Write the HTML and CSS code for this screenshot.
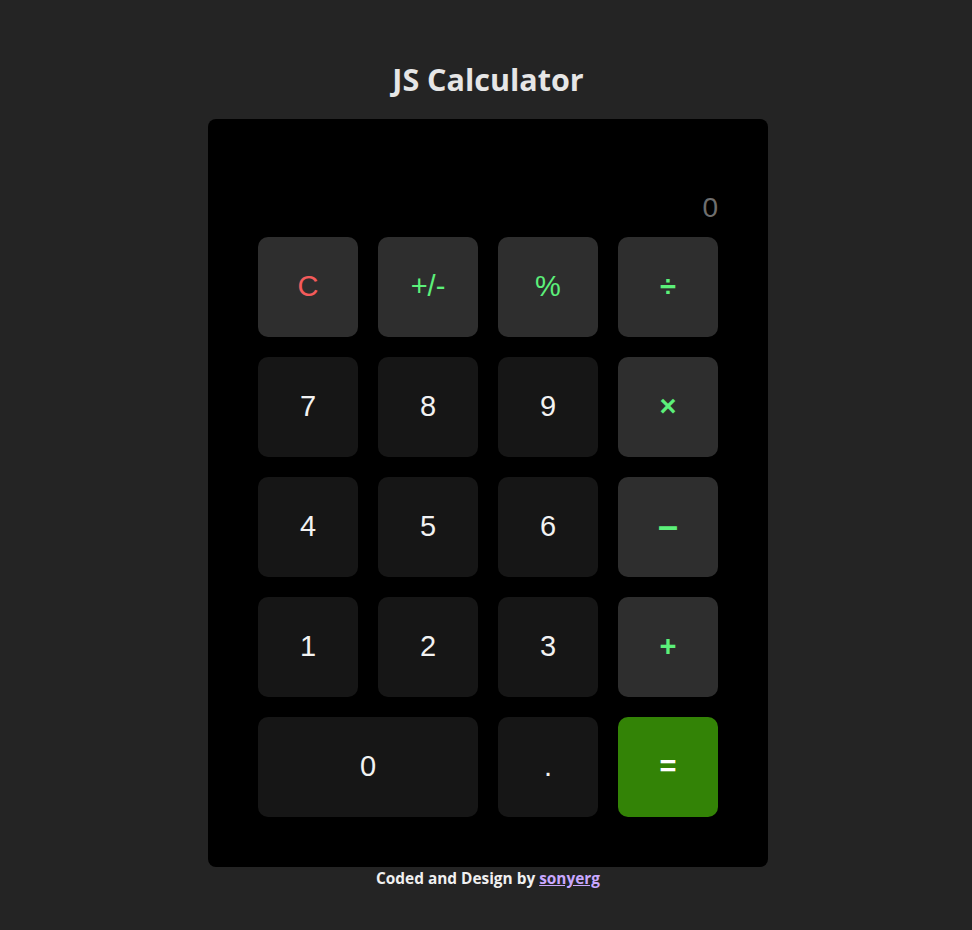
FILE: index.html
```html
<!DOCTYPE html>
<html lang="en">
<head>
<meta charset="utf-8">
<title>JS Calculator</title>
<link rel="stylesheet" href="styles.css">
</head>
<body>
<main class="page">
  <h1 class="title">JS Calculator</h1>
  <section class="calculator">
    <div class="display">0</div>
    <div class="keys">
      <button class="key key--fn key--clear">C</button>
      <button class="key key--fn key--green">+/-</button>
      <button class="key key--fn key--green">%</button>
      <button class="key key--fn key--green key--op">÷</button>
      <button class="key">7</button>
      <button class="key">8</button>
      <button class="key">9</button>
      <button class="key key--fn key--green key--op">×</button>
      <button class="key">4</button>
      <button class="key">5</button>
      <button class="key">6</button>
      <button class="key key--fn key--green key--op key--minus">–</button>
      <button class="key">1</button>
      <button class="key">2</button>
      <button class="key">3</button>
      <button class="key key--fn key--green key--op">+</button>
      <button class="key key--wide">0</button>
      <button class="key">.</button>
      <button class="key key--equals">=</button>
    </div>
  </section>
  <p class="credit">Coded and Design by <a href="#" class="credit__link">sonyerg</a></p>
</main>
</body>
</html>
```
FILE: styles.css
```css
* { box-sizing: border-box; }
html, body { margin: 0; padding: 0; }
body {
  background: #242424;
  color: #e8e8e8;
  font-family: "Open Sans", "Noto Sans", sans-serif;
}
.page {
  display: flex;
  flex-direction: column;
  align-items: center;
  padding-left: 4px;
}
.title {
  margin: 59px 0 20px;
  font-size: 30.5px;
  line-height: 40px;
  font-weight: 700;
  color: #e6e6e6;
}
.calculator {
  width: 560px;
  height: 748px;
  background: #000;
  border-radius: 8px;
  padding: 50px;
  display: flex;
  flex-direction: column;
}
.display {
  height: 68px;
  padding-bottom: 13px;
  display: flex;
  align-items: flex-end;
  justify-content: flex-end;
  font-family: "Liberation Sans", Arial, sans-serif;
  font-size: 28px;
  line-height: 32px;
  color: #6e6e6e;
}
.keys {
  display: grid;
  grid-template-columns: repeat(4, 100px);
  grid-auto-rows: 100px;
  gap: 20px;
}
.key {
  border: 0;
  border-radius: 10px;
  background: #161616;
  color: #f2f2f2;
  font-family: "Liberation Sans", Arial, sans-serif;
  font-size: 29px;
  padding: 0 0 2px;
  display: flex;
  align-items: center;
  justify-content: center;
}
.key--fn { background: #2e2e2e; }
.key--clear { color: #f45b5b; }
.key--green { color: #5cf07a; }
.key--op { font-weight: 700; }
.key--minus { font-size: 36px; }
.key--wide { grid-column: span 2; }
.key--equals {
  background: #338306;
  color: #ffffff;
  font-weight: 700;
}
.credit {
  margin: 3px 0 0;
  font-size: 15.4px;
  line-height: 18px;
  font-weight: 700;
  color: #f0f0f0;
}
.credit__link { color: #c9a8ff; }
```
